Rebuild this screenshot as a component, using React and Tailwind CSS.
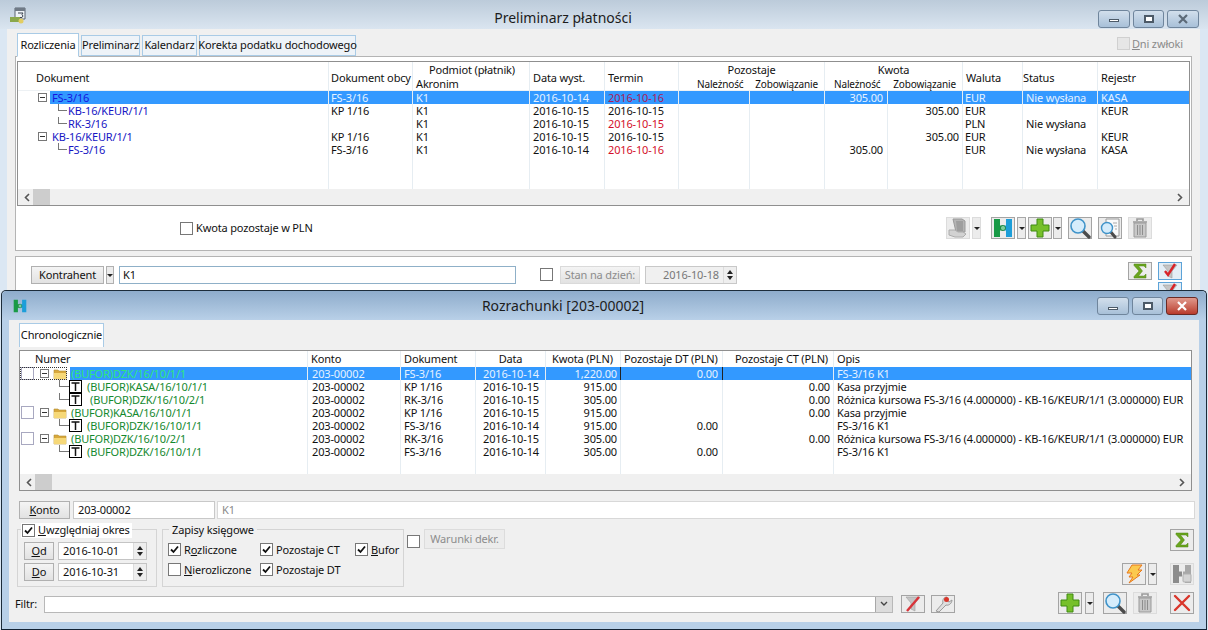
import React from "react";

const Sigma = () => (
  <svg width="16" height="16" viewBox="0 0 16 16">
    <path d="M2 1h12v4l-2-2H6.500l4 5-4 5H12l2-2v4H2v-1.500L7 8 2 2.500z" fill="#6aa51e" stroke="#4d8412" strokeWidth="0.5" />
  </svg>
);
const FunnelCheck = () => (
  <svg width="18" height="18" viewBox="0 0 18 18">
    <path d="M2 3h14l-5 6v7l-4-2V9z" fill="#c4c4c4" stroke="#9a9a9a" strokeWidth="0.6" />
    <path d="M4 9l3 4 7-11" fill="none" stroke="#d8232a" strokeWidth="2.4" />
  </svg>
);
const Bridge = ({ size = 20, gray }) => (
  <svg width={size} height={size} viewBox="0 0 20 20">
    <path d="M1 1h6v6.500h3v5H7V19H1z" fill={gray ? "#8c8c8c" : "#189a46"} />
    <path d="M13 1h6v18h-6v-6.500h-2v-5h2z" fill={gray ? "#a8a8a8" : "#1d9ed9"} />
    {!gray && <circle cx="10" cy="10" r="2.600" fill="#7ccf9a" stroke="#157a38" strokeWidth="0.8" />}
    {gray && <rect x="11" y="10" width="8" height="8" rx="1" fill="#d4d4d4" stroke="#b0b0b0" />}
  </svg>
);
const Plus = () => (
  <svg width="20" height="20" viewBox="0 0 20 20">
    <path d="M7 1h6v6h6v6h-6v6H7v-6H1V7h6z" fill="#76c02a" stroke="#3f8a12" strokeWidth="1" />
  </svg>
);
const Search = () => (
  <svg width="22" height="22" viewBox="0 0 22 22">
    <path d="M13 13l7 7" stroke="#4b4b4b" strokeWidth="3.400" strokeLinecap="round" />
    <circle cx="9" cy="9" r="7" fill="#d5ecfb" stroke="#3f93c9" strokeWidth="1.600" />
  </svg>
);
const SearchDoc = () => (
  <svg width="22" height="22" viewBox="0 0 22 22">
    <path d="M7 2h13v17H7z" fill="#fafafa" stroke="#9a9a9a" />
    <path d="M14 6h4M15 9h3M16 12h2" stroke="#a8a8a8" />
    <path d="M11 14l5 6" stroke="#4b4b4b" strokeWidth="3" strokeLinecap="round" />
    <circle cx="8" cy="11" r="5.500" fill="#d5ecfb" stroke="#3f93c9" strokeWidth="1.400" />
  </svg>
);
const Trash = () => (
  <svg width="18" height="20" viewBox="0 0 18 20">
    <path d="M2 4h14M6 3V1h6v2" fill="none" stroke="#9a9a9a" strokeWidth="1.600" />
    <path d="M3 5h12v14H3z" fill="#c8c8c8" stroke="#9a9a9a" />
    <path d="M6.500 7v10M9 7v10M11.500 7v10" stroke="#8e8e8e" />
  </svg>
);
const HandDoc = () => (
  <svg width="20" height="20" viewBox="0 0 20 20">
    <path d="M5 1h9l3 2v11H8z" fill="#b4b4b4" stroke="#9a9a9a" />
    <path d="M8 3h7v10H9z" fill="#9e9e9e" />
    <path d="M1 12h6l3 2h5l3 2-3 3H7l-6-2z" fill="#d2d2d2" stroke="#acacac" />
  </svg>
);
const Bolt = () => (
  <svg width="20" height="20" viewBox="0 0 20 20">
    <path d="M8 1h10l-4 5h4l-5 5h3L5 19l4-6H5l3-4H3z" fill="#fbc94e" stroke="#e8791c" strokeWidth="1" />
  </svg>
);
const RedX = () => (
  <svg width="18" height="18" viewBox="0 0 18 18">
    <path d="M2 2l14 14M16 2L2 16" stroke="#d9362b" strokeWidth="2.400" strokeLinecap="round" />
  </svg>
);
const FunnelX = () => (
  <svg width="18" height="16" viewBox="0 0 18 16">
    <path d="M2 1h14l-5 6v8l-4-2V7z" fill="#c4c4c4" stroke="#a0a0a0" strokeWidth="0.6" />
    <path d="M3 15L15 1" stroke="#d8343a" strokeWidth="2.400" />
  </svg>
);
const Wrench = () => (
  <svg width="20" height="18" viewBox="0 0 20 18">
    <path d="M3 16l7-8c-1-3 1-6 4-6l-1 3 3 2 3-2c0 3-3 6-6 5l-7 7z" fill="#dedede" stroke="#9a9a9a" />
    <circle cx="13.500" cy="4.500" r="2.500" fill="#d9362b" />
  </svg>
);
const Chevron = ({ dir }) => (
  <svg width="6" height="9" viewBox="0 0 6 9">
    <path d={dir === "left" ? "M5 1L1.500 4.500 5 8" : "M1 1l3.500 3.500L1 8"} fill="none" stroke="#555" strokeWidth="1.600" />
  </svg>
);
const CalendarMoney = () => (
  <svg width="17" height="17" viewBox="0 0 17 17">
    <path d="M5 1h10v11H5z" fill="#eef3f7" stroke="#5b6470" />
    <path d="M5 1h10v3H5z" fill="#707a86" />
    <path d="M8 6h5l-1 1.500 1 1.500-1 1.500H8" fill="none" stroke="#3a4350" />
    <path d="M0 10h10v5H0z" fill="#8aa84c" />
    <circle cx="11" cy="14" r="2.500" fill="#e2cd62" />
  </svg>
);
const Folder = () => (
  <svg width="14" height="12" viewBox="0 0 14 12">
    <path d="M1 2h4l1 1h7v8H1z" fill="#d8a83c" stroke="#b48f32" strokeWidth="0.6" />
    <path d="M1 5h12v6H1z" fill="#f6d878" />
  </svg>
);
const TBox = () => (
  <div className="w-[13px] h-[13px] border border-black bg-white flex items-center justify-center shrink-0">
    <svg width="9" height="9" viewBox="0 0 9 9">
      <path d="M0.500 1h8M4.500 1v8" stroke="#111" strokeWidth="1.500" />
    </svg>
  </div>
);

const IconBtn = ({ children, off, active, h = "h-[22px]" }) => (
  <div
    className={`w-[24px] ${h} shrink-0 flex items-center justify-center border ${
      active ? "border-[#5ca3d8] bg-[#e4eef6]" : off ? "border-[#dcdcdc] bg-[#ececec]" : "border-[#a4a4a4] bg-[#ececec]"
    }`}
  >
    {children}
  </div>
);
const DownMark = () => (
  <div className="w-0 h-0 border-x-[3px] border-x-transparent border-t-[3px] border-t-[#222]" />
);
const DropBtn = ({ off }) => (
  <div className={`w-[9px] h-[22px] shrink-0 flex items-center justify-center border bg-[#ececec] ${off ? "border-[#dcdcdc]" : "border-[#a8a8a8]"}`}>
    <DownMark />
  </div>
);
const Check = ({ on, muted, gray }) => (
  <div className={`w-[13px] h-[13px] shrink-0 flex items-center justify-center border ${gray ? "border-[#d0d0d0] bg-[#e6e6e6]" : muted ? "border-[#a8a8c0] bg-white" : "border-[#777] bg-white"}`}>
    {on && (
      <svg width="11" height="11" viewBox="0 0 11 11">
        <path d="M2 5.500l2.500 2.500L9 2.500" fill="none" stroke="#111" strokeWidth="1.800" />
      </svg>
    )}
  </div>
);
const Expander = () => (
  <div className="w-[9px] h-[9px] border border-[#777] bg-white flex items-center justify-center shrink-0">
    <div className="w-[5px] h-px bg-[#333]" />
  </div>
);
const Spinner = () => (
  <div className="w-[13px] h-full flex flex-col items-center justify-center gap-[2px] bg-[#eeeeee] border-l border-[#dcdcdc]">
    <div className="w-0 h-0 border-x-[3px] border-x-transparent border-b-[4px] border-b-[#222]" />
    <div className="w-0 h-0 border-x-[3px] border-x-transparent border-t-[4px] border-t-[#222]" />
  </div>
);
const Controls = ({ active }) => (
  <div className="flex gap-[3px] mr-[3px]">
    <div className="w-[32px] h-[18px] rounded-[3px] border border-[#6f859c] bg-gradient-to-b from-[#d2dfec] to-[#a8c0d8] flex items-center justify-center">
      <div className="w-[10px] h-[3px] mt-[4px] bg-white border border-[#4c5a68]" />
    </div>
    <div className="w-[31px] h-[18px] rounded-[3px] border border-[#6f859c] bg-gradient-to-b from-[#d2dfec] to-[#a8c0d8] flex items-center justify-center">
      <div className="w-[10px] h-[8px] border-2 border-[#4c5a68] bg-white" />
    </div>
    <div className={`w-[32px] h-[18px] rounded-[3px] border flex items-center justify-center ${active ? "border-[#6a2a24] bg-gradient-to-b from-[#e0988c] to-[#b83a2c]" : "border-[#6f859c] bg-gradient-to-b from-[#d2dfec] to-[#a8c0d8]"}`}>
      <svg width="12" height="10" viewBox="0 0 12 10">
        <path d="M2 1l8 8M10 1L2 9" stroke={active ? "#fff" : "#5c6a78"} strokeWidth="2.200" />
      </svg>
    </div>
  </div>
);
const ScrollBar = ({ h }) => (
  <div className={`${h} shrink-0 bg-[#f0f0f0] flex items-center justify-between pl-[6px] pr-[6px]`}>
    <div className="flex items-center gap-[3px] h-full">
      <Chevron dir="left" />
      <div className="w-[17px] h-full bg-[#cdcdcd]" />
    </div>
    <Chevron dir="right" />
  </div>
);

const topCols = "grid grid-cols-[311px_84px_117px_75px_74px_71px_75px_63px_75px_60px_75px_1fr]";
const topRows = [
  { lvl: 0, doc: "FS-3/16", obcy: "FS-3/16", ak: "K1", data: "2016-10-14", termin: "2016-10-16", red: true, nal: "305.00", zob: "", wal: "EUR", st: "Nie wysłana", rej: "KASA", sel: true },
  { lvl: 1, doc: "KB-16/KEUR/1/1", obcy: "KP 1/16", ak: "K1", data: "2016-10-15", termin: "2016-10-15", nal: "", zob: "305.00", wal: "EUR", st: "", rej: "KEUR" },
  { lvl: 1, doc: "RK-3/16", obcy: "", ak: "K1", data: "2016-10-15", termin: "2016-10-15", red: true, nal: "", zob: "", wal: "PLN", st: "Nie wysłana", rej: "" },
  { lvl: 0, doc: "KB-16/KEUR/1/1", obcy: "KP 1/16", ak: "K1", data: "2016-10-15", termin: "2016-10-15", nal: "", zob: "305.00", wal: "EUR", st: "", rej: "KEUR" },
  { lvl: 1, doc: "FS-3/16", obcy: "FS-3/16", ak: "K1", data: "2016-10-14", termin: "2016-10-16", red: true, nal: "305.00", zob: "", wal: "EUR", st: "Nie wysłana", rej: "KASA" },
];

const botCols = "grid grid-cols-[288px_93px_75px_70px_75px_102px_111px_1fr]";
const kursowa = "Różnica kursowa FS-3/16 (4.000000) - KB-16/KEUR/1/1 (3.000000) EUR";
const botRows = [
  { lvl: 0, num: "(BUFOR)DZK/16/10/1/1", dok: "FS-3/16", data: "2016-10-14", kw: "1,220.00", dt: "0.00", ct: "", opis: "FS-3/16 K1", sel: true },
  { lvl: 1, num: "(BUFOR)KASA/16/10/1/1", dok: "KP 1/16", data: "2016-10-15", kw: "915.00", dt: "", ct: "0.00", opis: "Kasa przyjmie" },
  { lvl: 1, num: "(BUFOR)DZK/16/10/2/1", dok: "RK-3/16", data: "2016-10-15", kw: "305.00", dt: "", ct: "0.00", opis: kursowa, wide: true },
  { lvl: 0, num: "(BUFOR)KASA/16/10/1/1", dok: "KP 1/16", data: "2016-10-15", kw: "915.00", dt: "", ct: "0.00", opis: "Kasa przyjmie" },
  { lvl: 1, num: "(BUFOR)DZK/16/10/1/1", dok: "FS-3/16", data: "2016-10-14", kw: "915.00", dt: "0.00", ct: "", opis: "FS-3/16 K1" },
  { lvl: 0, num: "(BUFOR)DZK/16/10/2/1", dok: "RK-3/16", data: "2016-10-15", kw: "305.00", dt: "", ct: "0.00", opis: kursowa },
  { lvl: 1, num: "(BUFOR)DZK/16/10/1/1", dok: "FS-3/16", data: "2016-10-14", kw: "305.00", dt: "0.00", ct: "", opis: "FS-3/16 K1" },
];

const Tab = ({ children, active, w }) => (
  <div className={`${w} flex items-center justify-center border border-[#a9cbe6] whitespace-nowrap ${active ? "h-[24px] bg-white border-b-white -mb-px" : "h-[21px] bg-[#eef3f8]"}`}>
    {children}
  </div>
);

function TopTable() {
  const cell = "border-r border-[#e6edf2] h-[13px] leading-[13px] whitespace-nowrap";
  return (
    <div className="mx-px mt-[4px] h-[145px] flex flex-col border-t border-l border-[#8f8f8f] border-r border-b bg-white">
      <div className={`${topCols} h-[29px] shrink-0 border-b border-[#edf1f4] whitespace-nowrap`}>
        <div className="border-r border-[#e6edf2] pl-[18px] pt-[8px]">Dokument</div>
        <div className="border-r border-[#e6edf2] pl-[2px] pt-[8px]">Dokument obcy</div>
        <div className="border-r border-[#e6edf2] leading-[14px] pt-px">
          <div className="pl-[16px]">Podmiot (płatnik)</div>
          <div className="pl-[3px]">Akronim</div>
        </div>
        <div className="border-r border-[#e6edf2] pl-[3px] pt-[8px]">Data wyst.</div>
        <div className="border-r border-[#e6edf2] pl-[3px] pt-[8px]">Termin</div>
        <div className="col-span-2 border-r border-[#e6edf2] leading-[14px] pt-px">
          <div className="text-center">Pozostaje</div>
          <div className="flex justify-between pl-[18px] pr-[6px] text-[10px] leading-[14px]"><span>Należność</span><span>Zobowiązanie</span></div>
        </div>
        <div className="col-span-2 border-r border-[#e6edf2] leading-[14px] pt-px">
          <div className="text-center">Kwota</div>
          <div className="flex justify-between pl-[9px] pr-[6px] text-[10px] leading-[14px]"><span>Należność</span><span>Zobowiązanie</span></div>
        </div>
        <div className="border-r border-[#e6edf2] pl-[3px] pt-[8px]">Waluta</div>
        <div className="border-r border-[#e6edf2] pt-[8px]">Status</div>
        <div className="pl-[3px] pt-[8px]">Rejestr</div>
      </div>
      {topRows.map((r, i) => {
        const bg = r.sel ? "bg-[#3399ff] text-[#e6f2ff]" : "text-[#111]";
        return (
          <div key={i} className={topCols}>
            <div className={`${cell} flex`}>
              {r.lvl === 0 ? (
                <div className="flex items-center pl-[20px] flex-1 min-w-0">
                  <Expander />
                  <div className={`flex-1 ml-[3px] pl-[2px] h-[13px] ${r.sel ? "bg-[#3399ff] text-[#1515e0]" : "text-[#1616c4]"}`}>{r.doc}</div>
                </div>
              ) : (
                <div className="flex pl-[40px] text-[#1616c4]">
                  <div className="w-[9px] h-[7px] border-l border-b border-[#777] mr-px" />
                  {r.doc}
                </div>
              )}
            </div>
            <div className={`${cell} ${bg} pl-[2px]`}>{r.obcy}</div>
            <div className={`${cell} ${bg} pl-[3px]`}>{r.ak}</div>
            <div className={`${cell} ${bg} pl-[3px]`}>{r.data}</div>
            <div className={`${cell} ${bg} pl-[3px] ${r.sel ? "!text-[#a81c5c]" : r.red ? "!text-[#d4102a]" : ""}`}>{r.termin}</div>
            <div className={`${cell} ${bg}`} />
            <div className={`${cell} ${bg}`} />
            <div className={`${cell} ${bg} text-right pr-[4px]`}>{r.nal}</div>
            <div className={`${cell} ${bg} text-right pr-[3px]`}>{r.zob}</div>
            <div className={`${cell} ${bg} pl-[2px]`}>{r.wal}</div>
            <div className={`${cell} ${bg} pl-[3px]`}>{r.st}</div>
            <div className={`h-[13px] leading-[13px] whitespace-nowrap ${bg} pl-[3px]`}>{r.rej}</div>
          </div>
        );
      })}
      <div className={`${topCols} flex-1`}>
        {Array.from({ length: 11 }).map((_, i) => (
          <div key={i} className="border-r border-[#e6edf2]" />
        ))}
        <div />
      </div>
      <ScrollBar h="h-[16px]" />
    </div>
  );
}

function BottomTable() {
  const cell = "h-[13px] leading-[13px] whitespace-nowrap border-r border-[#e6edf2]";
  return (
    <div className="h-[141px] mr-[3px] flex flex-col border border-[#8f8f8f] bg-white">
      <div className={`${botCols} h-[16px] shrink-0 leading-[15px] whitespace-nowrap`}>
        <div className="pl-[15px] border-r border-[#e6edf2]">Numer</div>
        <div className="pl-[3px] border-r border-[#e6edf2]">Konto</div>
        <div className="pl-[3px] border-r border-[#e6edf2]">Dokument</div>
        <div className="text-center border-r border-[#e6edf2]">Data</div>
        <div className="pl-[6px] border-r border-[#e6edf2]">Kwota (PLN)</div>
        <div className="pl-[3px] border-r border-[#e6edf2]">Pozostaje DT (PLN)</div>
        <div className="text-right pr-[5px] border-r border-[#e6edf2]">Pozostaje CT (PLN)</div>
        <div className="pl-[3px]">Opis</div>
      </div>
      {botRows.map((r, i) => {
        const bg = r.sel ? "bg-[#3399ff] text-[#e6f2ff]" : "text-[#111]";
        return (
          <div key={i} className={botCols}>
            <div className={`${cell} flex items-center`}>
              {r.lvl === 0 ? (
                <div className="flex items-center flex-1 min-w-0">
                  <div className={`flex items-center pl-px h-[13px] ${r.sel ? "outline-1 outline-dotted outline-[#333] -outline-offset-1" : ""}`}>
                    <Check muted />
                    <div className="ml-[6px]"><Expander /></div>
                    <div className="ml-[4px]"><Folder /></div>
                  </div>
                  <div className={`flex-1 ml-[3px] pl-px h-[13px] ${r.sel ? "bg-[#3399ff] text-[#2ee67a]" : "text-[#14892f]"}`}>{r.num}</div>
                </div>
              ) : (
                <div className="flex items-start pl-[39px] h-[13px] text-[#14892f]">
                  <div className="w-[10px] h-[7px] border-l border-b border-[#777]" />
                  <TBox />
                  <span className={r.wide ? "ml-[8px]" : "ml-[5px]"}>{r.num}</span>
                </div>
              )}
            </div>
            <div className={`${cell} ${bg} pl-[4px]`}>203-00002</div>
            <div className={`${cell} ${bg} pl-[3px]`}>{r.dok}</div>
            <div className={`${cell} ${bg} pl-[7px]`}>{r.data}</div>
            <div className={`${cell} ${bg} text-right pr-[3px] ${r.sel ? "!border-[#222]" : ""}`}>{r.kw}</div>
            <div className={`${cell} ${bg} text-right pr-[4px] ${r.sel ? "!border-[#222]" : ""}`}>{r.dt}</div>
            <div className={`${cell} ${bg} text-right pr-[3px]`}>{r.ct}</div>
            <div className={`h-[13px] leading-[13px] whitespace-nowrap ${bg} pl-[3px]`}>{r.opis}</div>
          </div>
        );
      })}
      <div className={`${botCols} flex-1`}>
        {Array.from({ length: 7 }).map((_, i) => (
          <div key={i} className="border-r border-[#e6edf2]" />
        ))}
        <div />
      </div>
      <ScrollBar h="h-[16px]" />
    </div>
  );
}

const Btn = ({ children, w, off }) => (
  <div className={`${w} h-[18px] shrink-0 flex items-center justify-center whitespace-pre border bg-gradient-to-b from-[#f4f4f4] to-[#e2e2e2] ${off ? "border-[#dadada] text-[#8c8c8c]" : "border-[#b0b0b0]"}`}>
    {children}
  </div>
);
const DateField = ({ children, w }) => (
  <div className={`${w} h-[18px] flex items-center justify-between border border-[#c4c4c4] bg-white pl-[4px]`}>
    <span>{children}</span>
    <Spinner />
  </div>
);
const CheckLabel = ({ on, w, children }) => (
  <div className={`${w} h-[13px] leading-[13px] flex items-center gap-[3px]`}>
    <Check on={on} />
    <span className="whitespace-nowrap">{children}</span>
  </div>
);

export default function App() {
  return (
    <div className="relative w-[1208px] h-[630px] overflow-hidden bg-[#dbe7f3] text-[11px] tracking-[-0.15px] text-[#111] font-['Noto_Sans','Open_Sans',sans-serif]">
      {/* okno Preliminarz */}
      <div className="h-[29px] flex items-center bg-gradient-to-b from-[#bccbda] to-[#dae5f0]">
        <div className="w-[28px] pl-[10px] pt-[2px]"><CalendarMoney /></div>
        <div className="flex-1 text-center text-[14px] tracking-normal pt-[5px] text-[#1c1c1c]">Preliminarz płatności</div>
        <div className="w-[110px] pt-[8px]"><Controls /></div>
      </div>
      <div className="ml-[7px] mr-[8px] h-[601px] bg-[#f0f0f0] px-[8px]">
        <div className="flex items-end h-[27px] pl-[2px] gap-[2px] relative">
          <Tab active w="w-[62px]">Rozliczenia</Tab>
          <Tab w="w-[59px]">Preliminarz</Tab>
          <Tab w="w-[55px]">Kalendarz</Tab>
          <Tab w="w-[157px]">Korekta podatku dochodowego</Tab>
          <div className="ml-auto mr-[9px] mb-[4px] flex items-center gap-[2px] text-[#8a8a8a]">
            <Check gray />
            <span><u>D</u>ni zwłoki</span>
          </div>
        </div>
        <div className="h-[195px] border border-[#b4b4b4] bg-white">
          <TopTable />
          <div className="flex items-center justify-between h-[44px] pl-[164px] pr-[39px]">
            <div className="flex items-center gap-[3px]">
              <Check />
              <span>Kwota pozostaje w PLN</span>
            </div>
            <div className="flex items-center">
              <IconBtn off><HandDoc /></IconBtn>
              <div className="ml-[2px] mr-[10px]"><DropBtn off /></div>
              <IconBtn><Bridge /></IconBtn>
              <div className="ml-[2px] mr-[2px]"><DropBtn /></div>
              <IconBtn><Plus /></IconBtn>
              <div className="ml-px mr-[6px]"><DropBtn /></div>
              <IconBtn><Search /></IconBtn>
              <div className="ml-[6px]"><IconBtn><SearchDoc /></IconBtn></div>
              <div className="ml-[6px]"><IconBtn off><Trash /></IconBtn></div>
            </div>
          </div>
        </div>
        <div className="mt-[5px] h-[80px] border border-[#b4b4b4] bg-white pt-[9px] pl-[15px] pr-[9px]">
          <div className="flex items-start">
            <Btn w="w-[73px]">Kontrahent</Btn>
            <div className="w-[8px] h-[18px] ml-[2px] flex items-center justify-center border border-[#b0b0b0] bg-[#ececec]">
              <DownMark />
            </div>
            <div className="w-[397px] h-[18px] ml-[5px] border border-[#8fb0c8] bg-white pl-[3px] leading-[15px]">K1</div>
            <div className="ml-[24px] mt-[2px]"><Check /></div>
            <div className="ml-[7px]"><Btn w="w-[80px]" off>Stan na dzień:</Btn></div>
            <div className="w-[92px] h-[18px] ml-[5px] flex items-center justify-between border border-[#c8c8c8] bg-[#f0f0f0] pl-[17px] text-[#777]">
              <span>2016-10-18</span>
              <Spinner />
            </div>
            <div className="ml-auto -mt-[4px] flex flex-col gap-[2px]">
              <div className="flex gap-[6px]">
                <IconBtn h="h-[18px]"><Sigma /></IconBtn>
                <IconBtn h="h-[18px]" active><FunnelCheck /></IconBtn>
              </div>
              <div className="flex justify-end">
                <IconBtn h="h-[18px]" active><FunnelCheck /></IconBtn>
              </div>
            </div>
          </div>
        </div>
      </div>

      {/* okno Rozrachunki */}
      <div className="absolute left-px top-[290px] w-[1206px] h-[339px] flex flex-col rounded-t-[5px] border-t border-l border-r border-[#1c2c3a] bg-[#b8d0e8] shadow-[0_1px_0_#123]">
        <div className="h-[29px] shrink-0 flex items-center rounded-t-[5px] bg-gradient-to-b from-[#8eaccb] to-[#b9d0e8]">
          <div className="w-[27px] pl-[11px]"><Bridge size={14} /></div>
          <div className="flex-1 text-center text-[14px] tracking-normal text-[#1c1c1c]">Rozrachunki [203-00002]</div>
          <div className="w-[109px] pt-px"><Controls active /></div>
        </div>
        <div className="mx-[7px] h-[302px] bg-[#f0f0f0] pl-[10px] pr-[4px]">
          <div className="h-[30px] pt-[3px]">
            <div className="w-[85px] h-[24px] flex items-center justify-center border border-[#a9cbe6] border-b-0 bg-white">Chronologicznie</div>
          </div>
          <BottomTable />
          <div className="flex items-center mt-[10px] h-[18px]">
            <Btn w="w-[51px]"><span><u>K</u>onto</span></Btn>
            <div className="w-[142px] h-[18px] ml-[3px] border border-[#c8c8c8] bg-white pl-[4px] leading-[15px]">203-00002</div>
            <div className="flex-1 h-[18px] ml-[2px] border border-[#d8d8d8] bg-white pl-[4px] leading-[15px] text-[#8a8a8a]">K1</div>
          </div>
          <div className="flex justify-between">
            <div className="-ml-[2px]">
              <div className="flex mt-[10px]">
                <div className="relative w-[140px] h-[58px] border border-[#d4d4d4] pt-[12px] pl-[6px]">
                  <div className="absolute -top-[7px] left-[3px] w-[111px] h-[15px] flex items-center gap-[3px] pl-px bg-white whitespace-nowrap">
                    <Check on />
                    <span><u>U</u>względniaj okres</span>
                  </div>
                  <div className="flex flex-col gap-[3px]">
                    <div className="flex gap-[4px]">
                      <Btn w="w-[30px]"><span><u>O</u>d</span></Btn>
                      <DateField w="w-[89px]">2016-10-01</DateField>
                    </div>
                    <div className="flex gap-[4px]">
                      <Btn w="w-[30px]"><span><u>D</u>o</span></Btn>
                      <DateField w="w-[89px]">2016-10-31</DateField>
                    </div>
                  </div>
                </div>
                <div className="relative w-[242px] h-[58px] ml-[5px] border border-[#d4d4d4] pt-[13px] pl-[5px]">
                  <div className="absolute -top-[8px] left-[6px] px-[3px] bg-[#f0f0f0]">Zapisy księgowe</div>
                  <div className="flex flex-col gap-[7px]">
                    <div className="flex">
                      <CheckLabel on w="w-[92px]"><span>R<u>o</u>zliczone</span></CheckLabel>
                      <CheckLabel on w="w-[95px]">Pozostaje CT</CheckLabel>
                      <CheckLabel on w="w-[40px]"><span><u>B</u>ufor</span></CheckLabel>
                    </div>
                    <div className="flex">
                      <CheckLabel w="w-[92px]"><span><u>N</u>ierozliczone</span></CheckLabel>
                      <CheckLabel on w="w-[95px]">Pozostaje DT</CheckLabel>
                    </div>
                  </div>
                </div>
                <div className="ml-[3px] mt-[6px]"><Check /></div>
                <div className="ml-[4px] w-[81px] h-[20px] flex items-center justify-center border border-[#dcdcdc] bg-[#ececec] text-[#8c8c8c]">Warunki dekr.</div>
              </div>
              <div className="flex items-center mt-[8px] -ml-[2px] w-[940px]">
                <span className="w-[29px] shrink-0">Filtr:</span>
                <div className="flex-1 h-[17px] flex justify-end border border-[#b8b8b8] bg-white">
                  <div className="w-[17px] h-full flex items-center justify-center bg-[#dcdcdc] border-l border-[#a8a8a8]">
                    <svg width="8" height="6" viewBox="0 0 8 6"><path d="M1 1l3 3 3-3" fill="none" stroke="#444" strokeWidth="1.400" /></svg>
                  </div>
                </div>
                <div className="ml-[8px]"><IconBtn h="h-[18px]"><FunnelX /></IconBtn></div>
                <div className="ml-[6px]"><IconBtn h="h-[18px]"><Wrench /></IconBtn></div>
              </div>
            </div>
            <div className="w-[136px] mr-px mt-[10px] flex flex-col items-end">
              <IconBtn><Sigma /></IconBtn>
              <div className="flex items-center mt-[12px]">
                <IconBtn><Bolt /></IconBtn>
                <div className="ml-[2px] mr-[13px]"><DropBtn /></div>
                <IconBtn off><Bridge gray /></IconBtn>
              </div>
              <div className="flex items-center mt-[7px]">
                <IconBtn><Plus /></IconBtn>
                <div className="ml-[3px] mr-[9px]"><DropBtn /></div>
                <IconBtn><Search /></IconBtn>
                <div className="ml-[6px] mr-[13px]"><IconBtn off><Trash /></IconBtn></div>
                <IconBtn><RedX /></IconBtn>
              </div>
            </div>
          </div>
        </div>
      </div>
    </div>
  );
}
